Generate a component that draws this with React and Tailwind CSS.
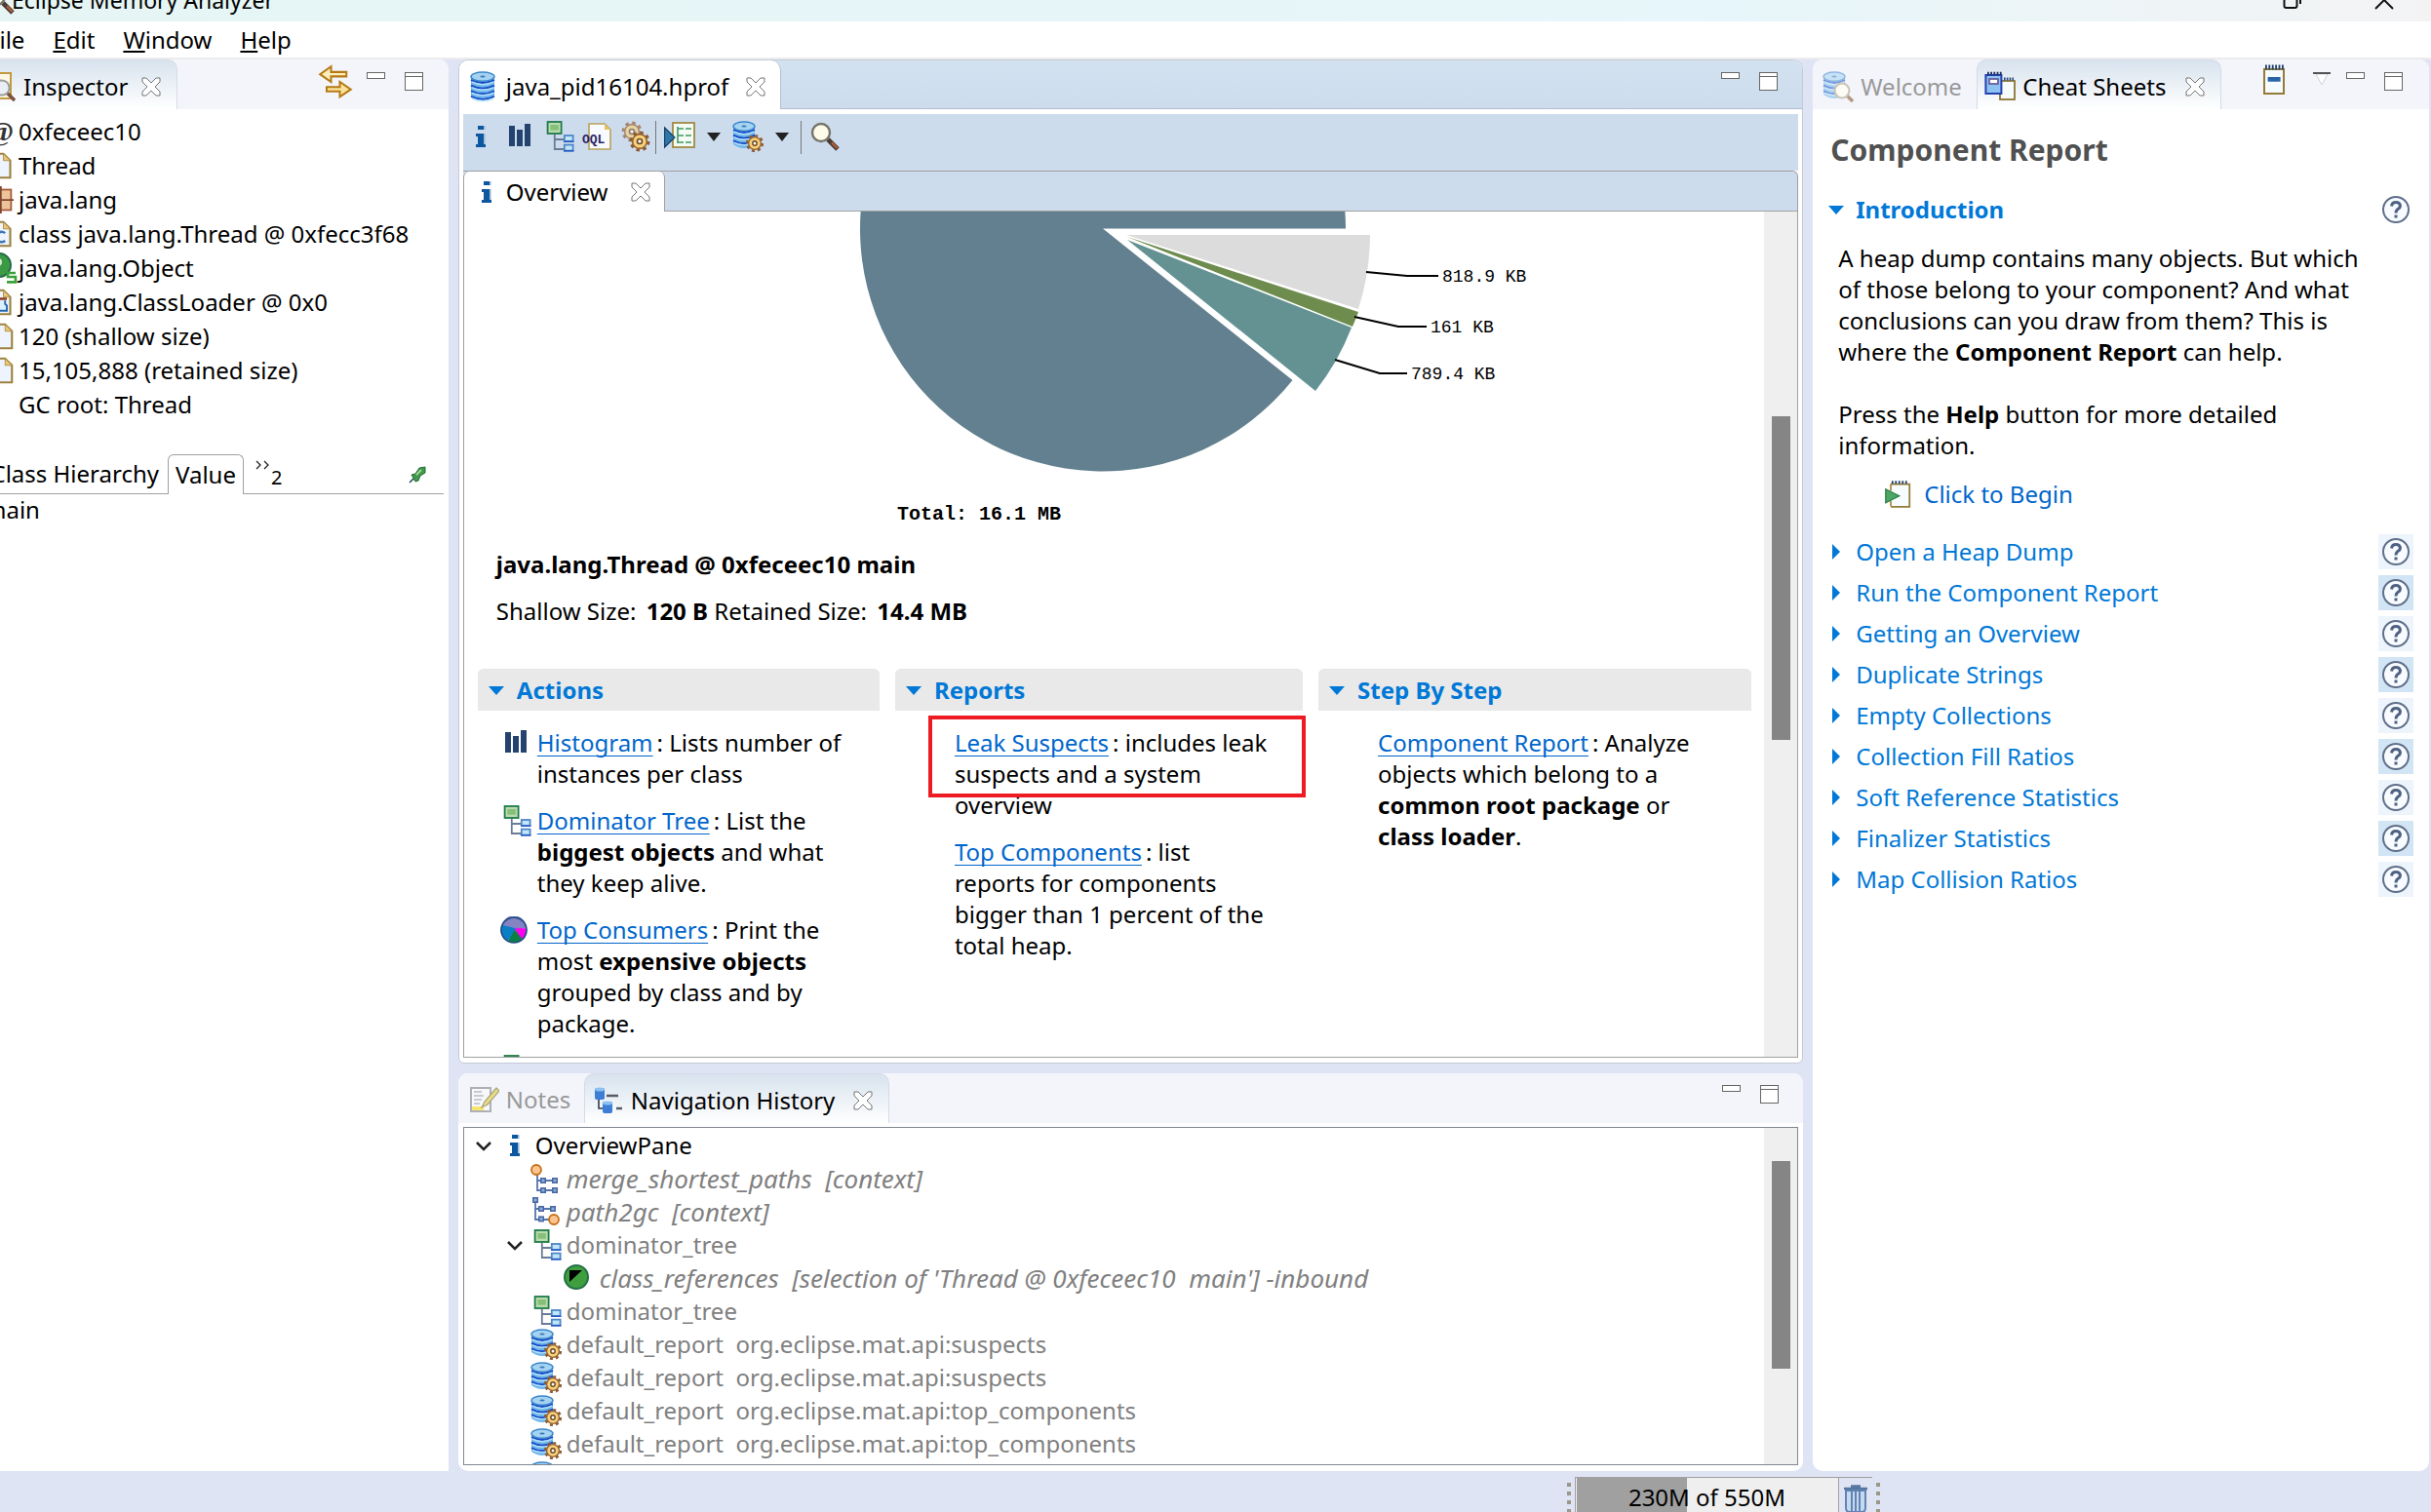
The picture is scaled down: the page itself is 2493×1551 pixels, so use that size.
import { useState } from 'react';

function Icon({ children, className = 'size-8' }) {
  return (
    <svg viewBox="0 0 16 16" aria-hidden="true" className={`shrink-0 ${className}`}>
      {children}
    </svg>
  );
}

function InfoIcon() {
  return (
    <Icon>
      <path d="M6.500 2.500h3v2h-3zM5.500 6.500H9.500V12h1v1.500H5.500V12h1V8h-1z" fill="#0d57a0" />
      <path d="M9.500 2.500h.8v2h-.8zM9.500 6.500h.8V12h-.8z" fill="#9dbdd8" />
    </Icon>
  );
}

function HistogramIcon() {
  return (
    <Icon>
      <path d="M2.500 2.500h3V13h-3zM6.500 4.500h3V13h-3zM10.500 1.500h3V13h-3z" fill="#24446f" />
    </Icon>
  );
}

function TreeIcon() {
  return (
    <Icon>
      <g transform="translate(.9 0)">
        <path d="M5 7v7.500h5.500M5 9.500h5.500" fill="none" stroke="#6b7b96" strokeWidth=".9" />
        <rect x="1.400" y=".5" width="7" height="6" fill="#b9dcae" stroke="#1f7a4a" strokeWidth=".9" />
        <rect x="2.800" y="2" width="4.200" height="2.800" fill="#86bf78" />
        <rect x="10" y="7.500" width="4.400" height="3" fill="#bfe6fb" stroke="#4f86c6" strokeWidth=".9" />
        <rect x="10" y="12.300" width="4.400" height="3" fill="#bfe6fb" stroke="#4f86c6" strokeWidth=".9" />
        <path d="M9.600 10.600h5.200M9.600 15.400h5.200" stroke="#2457c4" strokeWidth=".8" />
      </g>
    </Icon>
  );
}

function Gear({ x, y, s = 1 }) {
  return (
    <g transform={`translate(${x} ${y}) scale(${s})`}>
      <circle r="3.900" fill="none" stroke="#8a5a35" strokeWidth="1.300" strokeDasharray="1.500 1.560" />
      <circle r="3.200" fill="#f6d27a" stroke="#96602f" strokeWidth=".7" />
      <circle r="1.100" fill="#fff" stroke="#6d4322" strokeWidth=".7" />
    </g>
  );
}

function Cylinder({ tall }) {
  const rows = tall ? [4.500, 7.300, 10.100, 12.900] : [4.500, 7.300, 10.100];
  return (
    <g>
      <path d={tall ? 'M2 2.500v11q6 4 12 0v-11z' : 'M.5 2.500v9.500q5.500 4 11 0V2.500z'} fill="#6db6ea" />
      {rows.map(y => (
        <g key={y}>
          <path
            d={tall ? `M2 ${y}q6 3 12 0` : `M.5 ${y}q5.500 3 11 0`}
            fill="none" stroke="#1748c8" strokeWidth=".9"
          />
          <path
            d={tall ? `M2.500 ${y + 1.100}q5.500 2.500 11 0` : `M1 ${y + 1.100}q5 2.500 10 0`}
            fill="none" stroke="#b5e0f8" strokeWidth=".7"
          />
        </g>
      ))}
      <ellipse cx={tall ? 8 : 6} cy="2.800" rx={tall ? 6 : 5.500} ry="2.300" fill="#a4d3f2" stroke="#3b86cc" strokeWidth=".7" />
      <ellipse cx={tall ? 8 : 6} cy="2.800" rx="1.300" ry=".5" fill="#3e79b4" />
    </g>
  );
}

function HeapIcon() {
  return <Icon><Cylinder tall /></Icon>;
}

function ReportIcon() {
  return <Icon><Cylinder /><Gear x="11.500" y="11.500" /></Icon>;
}

function MagnifierIcon() {
  return (
    <Icon>
      <path d="M9.500 9.500l5 5" stroke="#4c3a34" strokeWidth="2.400" />
      <path d="M11.500 11.200l2.800 2.800" stroke="#b0603a" strokeWidth="1.100" />
      <circle cx="6" cy="6" r="4.500" fill="#fffbe9" stroke="#75756b" strokeWidth="1.200" />
    </Icon>
  );
}

function PageIcon({ children, right = 14 }) {
  return (
    <Icon className="size-7">
      <path d={`M1 1h${right - 5}l4 4v10H1z`} fill="#eef4fd" stroke="#9c8140" strokeWidth="1.200" />
      <path d={`M${right - 4} 1v4h4z`} fill="#e8c77a" stroke="#b08a3c" strokeWidth=".5" />
      {children}
    </Icon>
  );
}

function AtIcon() {
  return <span aria-hidden="true" className="w-7 shrink-0 text-right font-[Liberation_Serif,serif] text-[28px] leading-none font-bold text-[#333]">@</span>;
}

function PackageIcon() {
  return (
    <Icon className="size-7">
      <rect x="2" y="2" width="12.500" height="12" fill="#eec39a" stroke="#a4583a" />
      <path d="M8.500 0v16M0 8h16" stroke="#7f4630" strokeWidth="1" />
    </Icon>
  );
}

function ClassIcon() {
  return (
    <PageIcon>
      <path d="M11 7.500Q9 6 7 7.500T7 12q2 1.500 4 0" fill="none" stroke="#3c76b4" strokeWidth="1.400" />
    </PageIcon>
  );
}

function SuperIcon() {
  return (
    <Icon>
      <circle cx="6.500" cy="6.500" r="6" fill="#3c9a45" stroke="#2a6b4c" />
      <circle cx="6" cy="5" r="2" fill="#d7ecd6" />
      <path d="M15 10.500h-4v2h4v2.700h-4.500" fill="none" stroke="#38a23c" strokeWidth="1.300" />
    </Icon>
  );
}

function LoaderIcon() {
  return (
    <PageIcon>
      <path d="M6 6h6" stroke="#8b3a1c" strokeWidth="1.400" />
      <path d="M7 7v2l-1 1v3h6v-3l-1-1V7" fill="#dcefff" stroke="#2469b0" strokeWidth="1.100" />
    </PageIcon>
  );
}

function OqlIcon() {
  return (
    <Icon>
      <path d="M3.500 1.500h8l3 3v10h-11z" fill="#f8fafe" stroke="#b7a25c" strokeWidth=".8" />
      <path d="M11.500 1.500v3h3z" fill="#e6c35f" />
      <text x="0" y="11.500" fontSize="6.500" fontWeight="bold" fontFamily="Liberation Mono, monospace" fill="#2b2568">OQL</text>
    </Icon>
  );
}

function GearsIcon() {
  return (
    <Icon>
      <g opacity=".65"><Gear x="5.500" y="5.500" s="1.150" /></g>
      <Gear x="9.500" y="10.500" s="1.150" />
    </Icon>
  );
}

function RunReportIcon() {
  return (
    <Icon>
      <rect x="4.500" y="1" width="11" height="12.500" fill="#f4fbf4" stroke="#a08a42" strokeWidth=".9" />
      <path d="M7 3v8.500M7 4h3M7 7.500h3M7 11h3M11 4h3M11 7.500h3M11 11h3" stroke="#3f9a61" strokeWidth=".8" />
      <path d="M.3 3.500L5.500 8.500.3 13.500z" fill="#2d78a8" stroke="#173f66" strokeWidth=".6" />
    </Icon>
  );
}

function PathsIcon({ reverse }) {
  return (
    <Icon>
      <path d={reverse ? 'M2.500 3v9h8M2.500 6.500h9' : 'M3.500 5v9h9M3.500 9h9'} fill="none" stroke="#5675ab" strokeWidth=".9" />
      {(reverse ? [[2.500, 2], [5.500, 6.500], [11.500, 6.500], [5.500, 11.700]] : [[6.500, 9], [12.500, 9], [6.500, 14], [12.500, 14]]).map(([x, y]) => (
        <rect key={`${x}-${y}`} x={x - 1.100} y={y - 1.100} width="2.200" height="2.200" fill="#8fb0dd" stroke="#4a69a3" strokeWidth=".8" />
      ))}
      <circle cx={reverse ? 12 : 3} cy={reverse ? 12 : 3.500} r="2.500" fill="#fcc58f" stroke="#c5701c" strokeWidth=".9" />
    </Icon>
  );
}

function ReferencesIcon() {
  return (
    <Icon>
      <circle cx="6.500" cy="7.500" r="6" fill="#3f9f3e" stroke="#25704a" strokeWidth="1" />
      <path d="M3 4h6.500L3 10z" fill="#000" />
    </Icon>
  );
}

function ConsumersIcon() {
  return (
    <Icon className="size-7">
      <path d="M8 8L.8 5A7.500 7.500 0 0 1 15.500 7z" fill="#8583c4" />
      <path d="M8 7h7.500A7.500 7.500 0 0 1 12.500 14z" fill="#f0e" />
      <path d="M8 7l5 6.600a7.500 7.500 0 0 1-8.500 1z" fill="#0a8044" />
      <path d="M9 7L4.500 14.600A7.500 7.500 0 0 1 .8 5z" fill="#0a7fc4" />
      <circle cx="8" cy="8" r="7.400" fill="none" stroke="#235187" strokeWidth="1" />
    </Icon>
  );
}

function NotesIcon() {
  return (
    <Icon>
      <path d="M1.500 2h10v12h-10z" fill="#f8f8fa" stroke="#aeb0b6" />
      <path d="M3 4h4M3 6h5M3 8h4M3 10h3" stroke="#b4bac9" strokeWidth=".7" />
      <path d="M2 11.500h6v2H2z" fill="#f7e66e" />
      <path d="M14.500 2l-6 7-1.500 3 3-1.500 6-7z" fill="#e8dd86" stroke="#a9a37a" strokeWidth=".6" />
    </Icon>
  );
}

function HistoryIcon() {
  return (
    <Icon>
      <path d="M3 7v5h4" fill="none" stroke="#333a48" strokeWidth=".8" />
      <rect x="1" y="1.500" width="5" height="6" rx="1" fill="#3c7dd6" />
      <ellipse cx="3.500" cy="2.300" rx="2.500" ry="1" fill="#8cc0f0" />
      <rect x="5" y="8.500" width="5" height="6" rx="1" fill="#3c7dd6" />
      <ellipse cx="7.500" cy="9.300" rx="2.500" ry="1" fill="#8cc0f0" />
      <path d="M7 5.500h6M12 12h3" stroke="#555b66" strokeWidth="1.300" />
    </Icon>
  );
}

function WelcomeIcon() {
  return (
    <Icon>
      <g opacity=".55"><Cylinder /></g>
      <path d="M12.500 12.500l3 3" stroke="#b59b85" strokeWidth="1.800" />
      <circle cx="10" cy="10" r="3.700" fill="#fdfbf4" stroke="#c9c4b6" />
    </Icon>
  );
}

function SheetsIcon() {
  return (
    <Icon>
      <rect x="8" y="5" width="7.500" height="9.500" fill="#f7fbff" stroke="#8c7634" strokeWidth=".9" />
      <path d="M10 4h5.500" stroke="#274a84" strokeWidth="1.400" strokeDasharray=".8 .6" />
      <rect x=".7" y="2" width="8" height="9.500" fill="#8cc3f2" stroke="#2440ae" strokeWidth="1" />
      <rect x="2.500" y="4" width="4.500" height="2.500" fill="#fff" stroke="#6c5f9c" strokeWidth=".9" />
      <path d="M1.500 1.200h7.500" stroke="#1d2f63" strokeWidth="1.700" strokeDasharray=".9 .7" />
    </Icon>
  );
}

function InspectorIcon() {
  return (
    <Icon>
      <path d="M1 1h12v13H1z" fill="#fdf8e8" stroke="#c39a3e" />
      <path d="M11 11l4 4" stroke="#7b5142" strokeWidth="1.800" />
      <circle cx="8.500" cy="8.500" r="3.800" fill="#e9eff5" stroke="#9b9d98" />
    </Icon>
  );
}

function NotepadIcon() {
  return (
    <Icon>
      <rect x="3" y="2.500" width="10" height="12.500" fill="#f6fbff" stroke="#937c36" />
      <path d="M3.500 1.500h10" stroke="#1d3e6b" strokeWidth="2.400" strokeDasharray=".9 .8" />
      <path d="M4.800 7.700h6.500" stroke="#2a64a6" strokeWidth="2.400" />
    </Icon>
  );
}

function BeginIcon() {
  return (
    <Icon className="size-7">
      <path d="M4 2h11v13.400H4" fill="#f7fcff" stroke="#937c36" />
      <path d="M4 2v4M4 12v3" stroke="#b08a3c" />
      <path d="M4.500 1h10" stroke="#1d3e6b" strokeWidth="1.600" strokeDasharray="1 1" />
      <path d="M1 5l8 4-8 4z" fill="#4aa765" stroke="#2c7c49" strokeWidth=".7" />
    </Icon>
  );
}

function CloseX() {
  return (
    <svg viewBox="0 0 20 20" aria-hidden="true" className="size-5">
      <path
        d="M1 1h4l5 5 5-5h4v4l-5 5 5 5v4h-4l-5-5-5 5H1v-4l5-5-5-5z"
        fill="#fff" stroke="#757575" strokeWidth="1"
      />
    </svg>
  );
}

function PaneButtons() {
  return (
    <>
      <button aria-label="Minimize" className="flex h-[19px] items-start">
        <span className="block h-[7px] w-[19px] border border-[#666] bg-white" />
      </button>
      <button aria-label="Maximize" className="h-[19px]">
        <span className="block h-[19px] w-[19px] border border-[#666] bg-white">
          <span className="block h-1 border-b border-[#666]" />
        </span>
      </button>
    </>
  );
}

function Tab({ icon, label, active, className = '' }) {
  return (
    <div
      className={`flex h-[51px] shrink-0 items-center pt-1 whitespace-nowrap ${
        active ? 'rounded-t-[10px] border-x border-t border-[#d5dbe8] bg-linear-to-b from-[#d8e3ee] to-white' : ''
      } ${className}`}
    >
      <button className={`flex items-center gap-[7px] ${active ? 'text-black' : 'text-[#999]'}`}>
        {icon}
        {label}
      </button>
      {active && <button aria-label={`Close ${label}`} className="mr-4 ml-auto"><CloseX /></button>}
    </div>
  );
}

function ScrollBar({ top, height }) {
  return (
    <div className="flex w-[34px] shrink-0 flex-col items-center bg-[#efefef]" aria-hidden="true">
      <div style={{ height: `${top}%` }} className="shrink-0" />
      <div style={{ height: `${height}%` }} className="w-[19px] shrink-0 bg-[#858585]" />
    </div>
  );
}

const attributes = [
  { icon: <AtIcon />, text: '0xfeceec10' },
  { icon: <PageIcon />, text: 'Thread' },
  { icon: <PackageIcon />, text: 'java.lang' },
  { icon: <ClassIcon />, text: 'class java.lang.Thread @ 0xfecc3f68' },
  { icon: <SuperIcon />, text: 'java.lang.Object' },
  { icon: <LoaderIcon />, text: 'java.lang.ClassLoader @ 0x0' },
  { icon: <PageIcon right={15} />, text: '120 (shallow size)' },
  { icon: <PageIcon right={15} />, text: '15,105,888 (retained size)' },
  { icon: null, text: 'GC root: Thread' },
];

function Inspector() {
  return (
    <aside className="flex min-w-0 flex-col overflow-hidden rounded-tr-[10px] bg-white">
      <div className="flex h-[51px] shrink-0 items-start bg-[#f4f5fb]">
        <Tab active icon={<InspectorIcon />} label="Inspector" className="w-[198px]" />
        <div className="ml-auto flex items-start gap-5 pt-[13px] pr-[26px]">
          <button aria-label="Link with Snapshot" className="-mt-2 -mr-1.5">
            <Icon className="size-9">
              <path d="M6 1v2.500h7v2H6V8L1 4.500z" fill="#fdeebb" stroke="#b57a14" strokeWidth=".9" />
              <path d="M10 8v2.300H4v2h6v2.500l5-3.400z" fill="#fbe199" stroke="#b57a14" strokeWidth=".9" />
            </Icon>
          </button>
          <PaneButtons />
        </div>
      </div>
      <ul className="pt-[5px]">
        {attributes.map(row => (
          <li key={row.text} className="flex h-[35px] items-center">
            <span className="flex w-[35px] shrink-0 items-center pl-0.5">{row.icon}</span>
            <span className="whitespace-nowrap">{row.text}</span>
          </li>
        ))}
      </ul>
      <div className="mt-[34px] mr-[5px] flex h-[41px] items-stretch">
        <button className="flex w-[188px] shrink-0 items-center justify-end border-b border-[#a0a0a0] pr-[9px] whitespace-nowrap">
          Class Hierarchy
        </button>
        <button className="w-[78px] shrink-0 rounded-t-md border-x border-t border-[#a0a0a0]">Value</button>
        <div className="flex grow items-start justify-between border-b border-[#a0a0a0] pr-[18px] pl-3">
          <button aria-label="2 more tabs" className="flex items-start leading-none">
            <svg viewBox="0 0 16 10" aria-hidden="true" className="mt-1.5 h-2.5 w-4">
              <path d="M1 1l4 4-4 4M9 1l4 4-4 4" fill="none" stroke="#222" strokeWidth="1.300" />
            </svg>
            <span className="mt-3.5 text-[20px] leading-none">2</span>
          </button>
          <button aria-label="Pin tab" className="mt-3">
            <svg viewBox="0 0 18 18" aria-hidden="true" className="size-[18px]">
              <path d="M1 17l4-4" stroke="#1c3c58" strokeWidth="1.500" />
              <path d="M3 9l4-1 4-6 6-1v6l-5 3-2 5-3 1z" fill="#3f9a4b" stroke="#1f6d33" />
              <path d="M8 9l5-5" stroke="#a3d493" strokeWidth="2" />
            </svg>
          </button>
        </div>
      </div>
      <p className="leading-8">main</p>
    </aside>
  );
}

const slices = [
  { d: 'M678 24h250a250 250 0 0 1-12 76z', fill: '#dcdcdc', line: '924,62 966,66 998,66', x: 1002, y: 72, label: '818.9 KB' },
  { d: 'M679 26l237 77a250 250 0 0 1-6 15z', fill: '#6e8c4e', line: '912,108 957,118 986,118', x: 990, y: 124, label: '161 KB' },
  { d: 'M679 29l230 90a250 250 0 0 1-37 65z', fill: '#649292', line: '892,152 938,166 966,166', x: 970, y: 172, label: '789.4 KB' },
];

function PieChart() {
  return (
    <svg viewBox="0 0 1200 340" role="img" aria-label="Biggest objects by retained size" className="h-[340px] w-[1200px] max-w-none shrink-0 font-[Liberation_Mono,monospace]">
      <path d="M654 17.500h249a249 249 0 1 0-54.500 155.500z" fill="#62808f" />
      {slices.map(s => (
        <g key={s.label}>
          <path d={s.d} fill={s.fill} />
          <polyline points={s.line} fill="none" stroke="#000" strokeWidth="2" />
          <text x={s.x} y={s.y} fontSize="18">{s.label}</text>
        </g>
      ))}
      <text x="443" y="316" fontSize="20" fontWeight="bold">Total: 16.1 MB</text>
    </svg>
  );
}

function Section({ title, children }) {
  return (
    <section className="min-w-0">
      <h3 className="rounded-t-md border-t border-[#e6e6e6] bg-[#e9e9e9] font-bold text-[#0078d7]">
        <button className="flex h-[42px] w-full items-center gap-[13px] pl-[11px]">
          <span className="h-0 w-0 border-x-[8px] border-t-[9px] border-x-transparent border-t-[#0078d7]" />
          {title}
        </button>
      </h3>
      <div className="flex flex-col gap-4 pt-[17px] leading-8 whitespace-nowrap">{children}</div>
    </section>
  );
}

function Entry({ icon, link, children }) {
  return (
    <div className="flex">
      <span className="flex h-8 w-[61px] shrink-0 items-center pl-[23px]">{icon}</span>
      {link && (
        <p>
          <a href="#" className="text-[#0066cc] underline decoration-1 underline-offset-4 [text-decoration-skip-ink:none]">{link}</a>
          <span className="pl-1">{children}</span>
        </p>
      )}
    </div>
  );
}

function Overview() {
  return (
    <div className="flex min-h-0 grow border border-t-0 border-[#a0a0a0]">
      <div className="min-w-0 grow overflow-hidden pl-px">
        <PieChart />
        <div className="pl-8 whitespace-nowrap">
          <p className="leading-11 font-bold">java.lang.Thread @ 0xfeceec10 main</p>
          <p className="mt-2.5 leading-8">
            Shallow Size: <b className="pl-1">120 B</b> Retained Size: <b className="pl-1">14.4 MB</b>
          </p>
        </div>
        <div className="mt-[43px] grid grid-cols-[minmax(0,412fr)_minmax(0,418fr)_minmax(0,444fr)] gap-4 pr-[13px] pl-[13px]">
          <Section title="Actions">
            <Entry icon={<HistogramIcon />} link="Histogram">
              : Lists number of<br />instances per class
            </Entry>
            <Entry icon={<TreeIcon />} link="Dominator Tree">
              : List the<br /><b>biggest objects</b> and what<br />they keep alive.
            </Entry>
            <Entry icon={<ConsumersIcon />} link="Top Consumers">
              : Print the<br />most <b>expensive objects</b><br />grouped by class and by<br />package.
            </Entry>
            <Entry icon={<TreeIcon />} />
          </Section>
          <div className="relative">
            <Section title="Reports">
              <Entry link="Leak Suspects">
                : includes leak<br />suspects and a system<br />overview
              </Entry>
              <Entry link="Top Components">
                : list<br />reports for components<br />bigger than 1 percent of the<br />total heap.
              </Entry>
            </Section>
            <div className="pointer-events-none absolute top-12 -right-[3px] left-[34px] h-[84px] border-4 border-[#ed1c24]" />
          </div>
          <Section title="Step By Step">
            <Entry link="Component Report">
              : Analyze<br />objects which belong to a<br /><b>common root package</b> or<br /><b>class loader</b>.
            </Entry>
          </Section>
        </div>
      </div>
      <ScrollBar top={24.2} height={38.4} />
    </div>
  );
}

function DropArrow({ label }) {
  return (
    <button aria-label={label} className="flex h-8 w-[38px] items-center justify-center">
      <span className="h-0 w-0 border-x-[7px] border-t-[9px] border-x-transparent border-t-[#222]" />
    </button>
  );
}

function Editor() {
  return (
    <section className="flex min-h-0 flex-[1029] flex-col overflow-hidden rounded-t-[10px] rounded-b-md border border-[#c4cad4] bg-white">
      <div className="flex h-[50px] shrink-0 border-b border-[#b4bdd0] bg-linear-to-b from-[#d3e2f0] to-[#cddced]">
        <div className="-mb-px flex w-[330px] items-center rounded-tr-[10px] border-r border-[#b4bdd0] bg-white pt-1 pl-2">
          <button className="flex items-center gap-2"><HeapIcon />java_pid16104.hprof</button>
          <button aria-label="Close java_pid16104.hprof" className="ml-auto pr-[15px]"><CloseX /></button>
        </div>
        <div className="ml-auto flex gap-5 pt-3 pr-[25px]"><PaneButtons /></div>
      </div>
      <div className="mx-1 mt-[5px] mb-[5px] flex min-h-0 grow flex-col">
        <div className="flex h-[58px] shrink-0 items-start bg-[#cddced] pt-[7px] pl-0.5">
          <div className="flex items-center gap-2">
            <button aria-label="Overview"><InfoIcon /></button>
            <button aria-label="Histogram"><HistogramIcon /></button>
            <button aria-label="Dominator tree"><TreeIcon /></button>
            <button aria-label="Object query language"><OqlIcon /></button>
            <button aria-label="Thread overview"><GearsIcon /></button>
          </div>
          <span className="mr-2 ml-[3px] h-[34px] w-px bg-[#777]" />
          <button aria-label="Run report"><RunReportIcon /></button>
          <DropArrow label="Choose report" />
          <button aria-label="Query browser"><ReportIcon /></button>
          <DropArrow label="Choose query" />
          <span className="mr-2 h-[34px] w-px bg-[#777]" />
          <button aria-label="Find object"><MagnifierIcon /></button>
        </div>
        <div className="flex h-[42px] shrink-0 rounded-tr-md border-t border-r border-b border-[#a0a0a0] bg-[#cddced]">
          <div className="-mb-px flex w-[207px] items-center rounded-t-md border-x border-[#a0a0a0] bg-white pl-[7px]">
            <button className="flex items-center gap-1"><InfoIcon />Overview</button>
            <button aria-label="Close Overview" className="ml-auto pr-3.5"><CloseX /></button>
          </div>
        </div>
        <Overview />
      </div>
    </section>
  );
}

const history = [
  { level: 0, open: true, icon: <InfoIcon />, text: 'OverviewPane' },
  { level: 1, icon: <PathsIcon />, text: 'merge_shortest_paths  [context]', italic: true },
  { level: 1, icon: <PathsIcon reverse />, text: 'path2gc  [context]', italic: true },
  { level: 1, open: true, icon: <TreeIcon />, text: 'dominator_tree' },
  { level: 2, icon: <ReferencesIcon />, text: "class_references  [selection of 'Thread @ 0xfeceec10  main'] -inbound", italic: true },
  { level: 1, icon: <TreeIcon />, text: 'dominator_tree' },
  { level: 1, icon: <ReportIcon />, text: 'default_report  org.eclipse.mat.api:suspects' },
  { level: 1, icon: <ReportIcon />, text: 'default_report  org.eclipse.mat.api:suspects' },
  { level: 1, icon: <ReportIcon />, text: 'default_report  org.eclipse.mat.api:top_components' },
  { level: 1, icon: <ReportIcon />, text: 'default_report  org.eclipse.mat.api:top_components' },
  { level: 1, icon: <ReportIcon />, text: '' },
];

const indents = ['pl-3', 'pl-11', 'pl-[78px]'];

function History() {
  return (
    <section className="flex min-h-0 flex-[409] flex-col overflow-hidden rounded-[10px] bg-white">
      <div className="flex h-[51px] shrink-0 bg-[#f4f5fb]">
        <Tab icon={<NotesIcon />} label="Notes" className="w-[129px] pl-2.5" />
        <Tab active icon={<HistoryIcon />} label="Navigation History" className="w-[313px] pl-2" />
        <div className="ml-auto flex gap-5 pt-3 pr-[25px]"><PaneButtons /></div>
      </div>
      <div className="mx-[5px] mt-1 mb-1.5 flex min-h-0 grow border border-[#828790]">
        <ul className="min-w-0 grow overflow-hidden pt-px">
          {history.map((row, i) => (
            <li key={i} className={`flex h-[34px] items-center ${indents[row.level]}`}>
              <span className="w-6 shrink-0">
                {row.open && (
                  <button aria-label={`Collapse ${row.text}`} className="block">
                    <svg viewBox="0 0 16 16" aria-hidden="true" className="size-4">
                      <path d="M1 5l7 7 7-7" fill="none" stroke="#222" strokeWidth="2.500" />
                    </svg>
                  </button>
                )}
              </span>
              {row.icon}
              <span className={`pl-[5px] whitespace-pre ${row.level ? 'text-[#808080]' : ''} ${row.italic ? 'text-[26px] italic' : ''}`}>
                {row.text}
              </span>
            </li>
          ))}
        </ul>
        <ScrollBar top={10} height={61.5} />
      </div>
    </section>
  );
}

function HelpButton({ label, tint = '' }) {
  return (
    <button aria-label={`Help: ${label}`} className={`flex size-9 items-center justify-center ${tint}`}>
      <svg viewBox="0 0 30 30" aria-hidden="true" className="size-[30px]">
        <circle cx="15" cy="15" r="13" fill="#f8fbff" stroke="#5f6f89" strokeWidth="2" />
        <path d="M10.500 11.500q.5-4 4.500-4t4.500 3.500q0 2-2.200 3.300T15 18.500" fill="none" stroke="#4f6283" strokeWidth="3" />
        <path d="M13.500 20.500h3v3h-3z" fill="#4f6283" />
      </svg>
    </button>
  );
}

const steps = [
  'Open a Heap Dump',
  'Run the Component Report',
  'Getting an Overview',
  'Duplicate Strings',
  'Empty Collections',
  'Collection Fill Ratios',
  'Soft Reference Statistics',
  'Finalizer Statistics',
  'Map Collision Ratios',
];

function CheatSheets() {
  const [openIntro, setOpenIntro] = useState(true);

  return (
    <aside className="flex min-w-0 flex-col overflow-hidden rounded-[10px] bg-white">
      <div className="flex h-[51px] shrink-0 bg-[#f4f5fb]">
        <Tab icon={<WelcomeIcon />} label="Welcome" className="w-[168px] pl-2.5" />
        <Tab active icon={<SheetsIcon />} label="Cheat Sheets" className="w-[251px] pl-[7px]" />
        <div className="ml-auto flex items-start gap-5 pt-[13px] pr-[27px]">
          <button aria-label="Cheat sheet selection" className="-mt-2 mr-1"><NotepadIcon /></button>
          <button aria-label="View menu" className="-mr-1">
            <svg viewBox="0 0 18 14" aria-hidden="true" className="h-3.5 w-[18px]">
              <path d="M3 2h12l-6 11z" fill="#fff" stroke="#b5b5b5" strokeWidth=".6" />
              <path d="M0 1h18" stroke="#555" strokeWidth="2" />
            </svg>
          </button>
          <PaneButtons />
        </div>
      </div>
      <h2 className="pt-5 pl-[18px] text-[30px] leading-11 font-bold text-[#505050]">Component Report</h2>
      <div className="mt-[21px] flex h-9 items-center justify-between pr-4 pl-4">
        <h3 className="font-bold text-[#0078d7]">
          <button className="flex items-center gap-3" onClick={() => setOpenIntro(!openIntro)}>
            <span className="h-0 w-0 border-x-[8px] border-t-[9px] border-x-transparent border-t-[#0078d7]" />
            Introduction
          </button>
        </h3>
        <HelpButton label="Introduction" />
      </div>
      {openIntro && (
        <div className="pt-4 pl-[26px] leading-8 whitespace-nowrap">
          <p>
            A heap dump contains many objects. But which<br />
            of those belong to your component? And what<br />
            conclusions can you draw from them? This is<br />
            where the <b>Component Report</b> can help.
          </p>
          <p className="pt-8">
            Press the <b>Help</b> button for more detailed<br />information.
          </p>
          <button className="mt-4 flex h-9 items-center gap-[13px] pl-[47px] text-[#0066cc]">
            <BeginIcon />Click to Begin
          </button>
        </div>
      )}
      <ul className="pt-5">
        {steps.map((step, i) => (
          <li key={step} className="flex h-[42px] items-center justify-between pr-4 pl-5">
            <button className="flex items-center gap-4 whitespace-nowrap text-[#0078d7]">
              <span className="h-0 w-0 border-y-[8px] border-l-[8px] border-y-transparent border-l-[#0078d7]" />
              {step}
            </button>
            <HelpButton label={step} tint={i % 2 ? 'bg-[#d2e5f5]' : 'bg-[#edf4fc]'} />
          </li>
        ))}
      </ul>
    </aside>
  );
}

function Grip() {
  return (
    <div className="flex flex-col gap-[5px] pt-1.5" aria-hidden="true">
      {[0, 1, 2, 3].map(n => <span key={n} className="size-1 bg-[#9b9789]" />)}
    </div>
  );
}

function StatusBar() {
  return (
    <footer className="flex h-[42px] shrink-0 items-start gap-1 pt-1.5 pl-[1623px]">
      <Grip />
      <div className="flex h-10 border-t border-[#a0a0a0]">
        <div className="relative flex w-[271px] items-center justify-center border-x border-[#a0a0a0] bg-[#efefef]">
          <div className="absolute inset-y-0 left-0 ml-px w-[42%] bg-[#a0a0a0]" />
          <span className="relative">230M of 550M</span>
        </div>
        <button aria-label="Run garbage collector" className="w-[34px] pl-1">
          <svg viewBox="0 0 26 34" aria-hidden="true" className="h-[34px] w-[26px]">
            <path d="M3 10h20v18q0 4-4 4H7q-4 0-4-4z" fill="#c5daf0" stroke="#6384b3" strokeWidth="2" />
            <path d="M9 11v20M13 11v20M17 11v20" stroke="#6384b3" strokeWidth="2" />
            <path d="M1 8h24M8 5.500h10" stroke="#56779f" strokeWidth="2.500" />
          </svg>
        </button>
      </div>
      <Grip />
    </footer>
  );
}

export default function App() {
  return (
    <div className="h-screen overflow-hidden bg-[#dfe4f5] font-['Noto_Sans','Open_Sans',sans-serif] text-[24px] leading-8 text-black">
      <div className="-mt-[22px] -ml-4 flex h-[calc(100vh+22px)] flex-col">
        <header className="flex h-11 shrink-0 items-center bg-linear-to-r from-[#e6f5f4] via-[#e6f6fa] via-70% to-[#f3f3f4] pr-[38px]">
          <MagnifierIcon />
          <h1 className="-ml-1 grow text-[23px]">Eclipse Memory Analyzer</h1>
          <button aria-label="Restore" className="mr-[74px]">
            <svg viewBox="0 0 20 20" aria-hidden="true" className="size-5">
              <rect x="1.500" y="4" width="13" height="14" rx="2" fill="none" stroke="#111" strokeWidth="2" />
              <path d="M6 1h10q2 0 2 2v11" fill="none" stroke="#111" strokeWidth="2" />
            </svg>
          </button>
          <button aria-label="Close">
            <svg viewBox="0 0 20 20" aria-hidden="true" className="size-5">
              <path d="M1 1l18 18M19 1L1 19" stroke="#111" strokeWidth="2" />
            </svg>
          </button>
        </header>
        <nav className="flex h-[39px] shrink-0 items-center gap-[29px] border-b-2 border-[#ececee] bg-white pl-[3px]">
          <button><u>F</u>ile</button>
          <button><u>E</u>dit</button>
          <button><u>W</u>indow</button>
          <button><u>H</u>elp</button>
        </nav>
        <main className="grid min-h-0 grow grid-cols-[minmax(0,476fr)_minmax(0,1380fr)_minmax(0,632fr)] gap-2.5 pr-0.5">
          <Inspector />
          <div className="flex min-h-0 min-w-0 flex-col gap-2.5">
            <Editor />
            <History />
          </div>
          <CheatSheets />
        </main>
        <StatusBar />
      </div>
    </div>
  );
}
